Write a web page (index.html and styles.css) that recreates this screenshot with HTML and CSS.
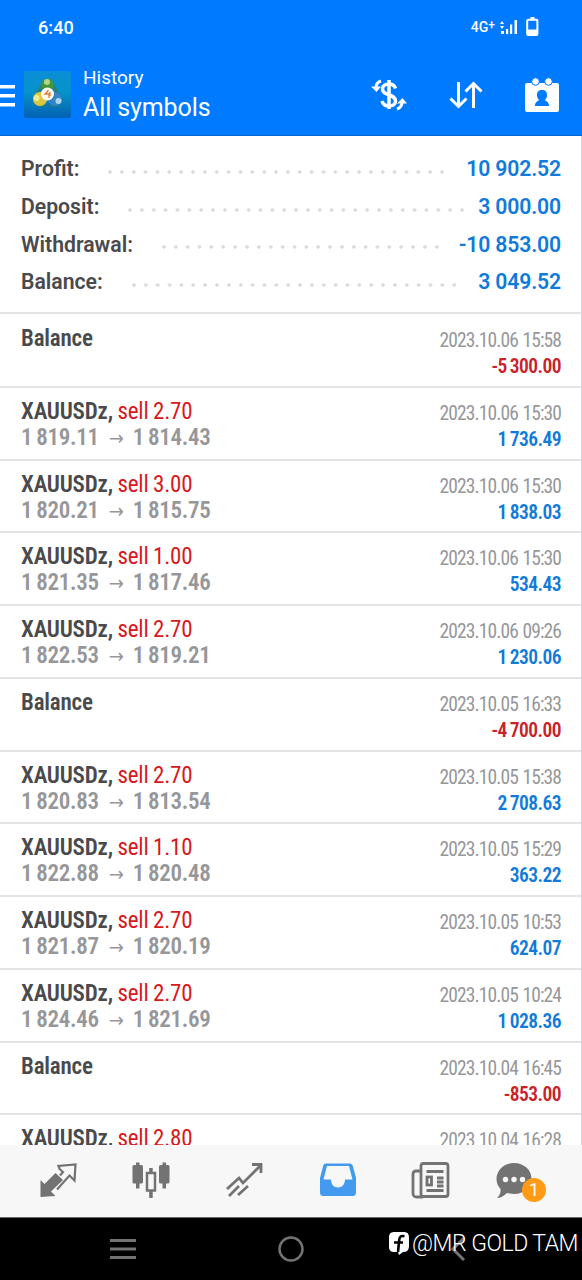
FILE: index.html
```html
<!doctype html>
<html lang="en">

<head>
    <meta charset="utf-8">
    <meta name="viewport" content="width=device-width, initial-scale=1.0">
    <title>History</title>
    <link rel="stylesheet" href="styles.css">
</head>

<body>
    <div class="screen">
        <header class="header">
            <div class="status-bar">
                <span class="clock">6:40</span>
                <span class="network">4G<sup>+</sup></span>
                <svg class="signal" width="18" height="16" viewBox="0 0 18 16" fill="#fff">
                    <path d="M0 5l2-3 2 3zM0 7h4l-2 3zM1 12h3v3H1zM6 10h2.200v5H6zM10 5.500h2.200V15H10zM14.500 1h2.500v14h-2.500z"/>
                </svg>
                <svg class="battery" width="13" height="20" viewBox="0 0 13 20">
                    <path d="M4.500 0h4v2h-4z" fill="#fff"/>
                    <rect x="1.200" y="2.700" width="10.200" height="15.200" rx="1" fill="none" stroke="#fff" stroke-width="2"/>
                    <path d="M1 12.500h11V18H1z" fill="#fff"/>
                </svg>
            </div>
            <div class="title-bar">
                <svg class="menu" width="15" height="24" viewBox="0 0 15 24" fill="#fff">
                    <path d="M0 2h15v3.500H0zM0 11h15v3.500H0zM0 20h15v3.500H0z"/>
                </svg>
                <svg class="logo" width="48" height="48" viewBox="0 0 48 48">
                    <defs>
                        <linearGradient id="sea" x1="0" y1="0" x2="0" y2="1">
                            <stop offset="0" stop-color="#0a8fd6"/>
                            <stop offset=".45" stop-color="#0792ca"/>
                            <stop offset="1" stop-color="#0560b4"/>
                        </linearGradient>
                    </defs>
                    <rect width="47" height="47" rx="2" fill="url(#sea)"/>
                    <path d="M20 11L10 28l3 6h8M27 11l10 17-3 6h-8" fill="none" stroke="#2b7f75" stroke-width="3"/>
                    <circle cx="23.500" cy="14" r="6.500" fill="#43963c"/>
                    <circle cx="23" cy="11" r="3" fill="#b4d48a"/>
                    <circle cx="16" cy="28" r="7" fill="#dcc840"/>
                    <circle cx="12.500" cy="27" r="3" fill="#f3e89a"/>
                    <circle cx="31" cy="28" r="7" fill="#3184c7"/>
                    <circle cx="34.500" cy="30" r="3" fill="#acd6ef"/>
                    <circle cx="23.500" cy="23" r="6.500" fill="#fffaf0"/>
                    <path d="M24.500 19l-3.500 4h4v4M26 21v4" fill="none" stroke="#e87939" stroke-width="1.300"/>
                </svg>
                <div class="titles">
                    <div class="subtitle">History</div>
                    <h1>All symbols</h1>
                </div>
                <svg class="currency" width="36" height="32" viewBox="0 0 36 32" fill="none" stroke="#fff">
                    <path d="M24.500 9.500c-1-3.500-3-4.500-6.500-4.500-4 0-6.500 2-6.500 5 0 7 13 4.500 13 12 0 3-2.500 5-6.500 5-4 0-6-1.500-7-5M18 1v29" stroke-width="3.500"/>
                    <path d="M10 2C6.500 3 5 5 5 9M26 30c3.500-1 5-3 5-7" stroke-width="3"/>
                    <path d="M0 7.500h10L5.500 13zM26 24.500h10L31.500 19z" fill="#fff" stroke="none"/>
                </svg>
                <svg class="sort" width="34" height="30" viewBox="0 0 34 30" fill="none" stroke="#fff" stroke-width="3">
                    <path d="M9.500 2v25M1.500 18.500l8 8 8-8M24.500 28V4M16.500 11.500l8-8 8 8"/>
                </svg>
                <svg class="calendar" width="36" height="36" viewBox="0 0 36 36">
                    <rect x="1" y="6" width="34" height="29" rx="2" fill="#fff"/>
                    <circle cx="11.500" cy="4.500" r="3.800" fill="#fff" stroke="#007aff"/>
                    <circle cx="24.500" cy="4.500" r="3.800" fill="#fff" stroke="#007aff"/>
                    <path d="M18 13c3.500 0 5 2 5 5 0 2-.5 3.500-2 5 .5 1.500 4 1 4 6H11c0-5 3.500-4.500 4-6-1.500-1.500-2-3-2-5 0-3 1.500-5 5-5z" fill="#007aff"/>
                </svg>
            </div>
        </header>

        <section class="summary">
            <div class="total"><b>Profit:</b><i class="dots profit"></i><span>10 902.52</span></div>
            <div class="total"><b>Deposit:</b><i class="dots deposit"></i><span>3 000.00</span></div>
            <div class="total"><b>Withdrawal:</b><i class="dots withdrawal"></i><span>-10 853.00</span></div>
            <div class="total"><b>Balance:</b><i class="dots balance"></i><span>3 049.52</span></div>
        </section>

        <main class="deals">
            <div class="deal">
                <div class="info"><div class="name">Balance</div></div>
                <div class="result"><div class="date">2023.10.06 15:58</div><div class="amount loss">-5 300.00</div></div>
            </div>
            <div class="deal">
                <div class="info"><div class="name">XAUUSDz, <span class="sell">sell 2.70</span></div><div class="price">1 819.11<span class="arrow">→</span>1 814.43</div></div>
                <div class="result"><div class="date">2023.10.06 15:30</div><div class="amount">1 736.49</div></div>
            </div>
            <div class="deal">
                <div class="info"><div class="name">XAUUSDz, <span class="sell">sell 3.00</span></div><div class="price">1 820.21<span class="arrow">→</span>1 815.75</div></div>
                <div class="result"><div class="date">2023.10.06 15:30</div><div class="amount">1 838.03</div></div>
            </div>
            <div class="deal">
                <div class="info"><div class="name">XAUUSDz, <span class="sell">sell 1.00</span></div><div class="price">1 821.35<span class="arrow">→</span>1 817.46</div></div>
                <div class="result"><div class="date">2023.10.06 15:30</div><div class="amount">534.43</div></div>
            </div>
            <div class="deal">
                <div class="info"><div class="name">XAUUSDz, <span class="sell">sell 2.70</span></div><div class="price">1 822.53<span class="arrow">→</span>1 819.21</div></div>
                <div class="result"><div class="date">2023.10.06 09:26</div><div class="amount">1 230.06</div></div>
            </div>
            <div class="deal">
                <div class="info"><div class="name">Balance</div></div>
                <div class="result"><div class="date">2023.10.05 16:33</div><div class="amount loss">-4 700.00</div></div>
            </div>
            <div class="deal">
                <div class="info"><div class="name">XAUUSDz, <span class="sell">sell 2.70</span></div><div class="price">1 820.83<span class="arrow">→</span>1 813.54</div></div>
                <div class="result"><div class="date">2023.10.05 15:38</div><div class="amount">2 708.63</div></div>
            </div>
            <div class="deal">
                <div class="info"><div class="name">XAUUSDz, <span class="sell">sell 1.10</span></div><div class="price">1 822.88<span class="arrow">→</span>1 820.48</div></div>
                <div class="result"><div class="date">2023.10.05 15:29</div><div class="amount">363.22</div></div>
            </div>
            <div class="deal">
                <div class="info"><div class="name">XAUUSDz, <span class="sell">sell 2.70</span></div><div class="price">1 821.87<span class="arrow">→</span>1 820.19</div></div>
                <div class="result"><div class="date">2023.10.05 10:53</div><div class="amount">624.07</div></div>
            </div>
            <div class="deal">
                <div class="info"><div class="name">XAUUSDz, <span class="sell">sell 2.70</span></div><div class="price">1 824.46<span class="arrow">→</span>1 821.69</div></div>
                <div class="result"><div class="date">2023.10.05 10:24</div><div class="amount">1 028.36</div></div>
            </div>
            <div class="deal">
                <div class="info"><div class="name">Balance</div></div>
                <div class="result"><div class="date">2023.10.04 16:45</div><div class="amount loss">-853.00</div></div>
            </div>
            <div class="deal">
                <div class="info"><div class="name">XAUUSDz, <span class="sell">sell 2.80</span></div></div>
                <div class="result"><div class="date">2023.10.04 16:28</div></div>
            </div>
        </main>

        <nav class="tabs">
            <a class="tab">
                <svg width="40" height="40" viewBox="0 0 40 40">
                    <path d="M2.500 20v17l15-1-4.500-4.500 12-11.500L17.500 13 6.500 24z" fill="#737373"/>
                    <path d="M21 8.500l4 3.500-3 3.500M21.500 8.500l-1-2.500 17-1.500-1 16-5-5-12.500 14" fill="none" stroke="#737373" stroke-width="2.200"/>
                </svg>
            </a>
            <a class="tab">
                <svg width="40" height="40" viewBox="0 0 40 40" fill="#737373">
                    <rect x="1.500" y="5" width="10.500" height="18.500" rx="1.500"/>
                    <path d="M5 2.500h3.500v26H5zM31.500 2.500H35v26h-3.500zM18.200 8h3.500v5h-3.500zM18.200 31h3.500v7h-3.500z"/>
                    <rect x="28" y="5" width="10.500" height="18.500" rx="1.500"/>
                    <rect x="16" y="13" width="8" height="17.500" fill="none" stroke="#737373" stroke-width="2.500"/>
                </svg>
            </a>
            <a class="tab">
                <svg width="40" height="40" viewBox="0 0 40 40" fill="none" stroke="#737373" stroke-width="2.800">
                    <path d="M3 29l12-11 4 5L36 6M28 4.500h9V13M5 36l10-10M14 35l10-9"/>
                </svg>
            </a>
            <a class="tab">
                <svg width="40" height="40" viewBox="0 0 40 40">
                    <path d="M7.500 3.500h24c2 0 3 1 3.500 3L38 18v14c0 3-1 4-4 4H6c-3 0-4-1-4-4V18L5 6.500c.5-2 1-3 2.500-3z" fill="#439aef"/>
                    <path d="M9 6h22l3.500 13.500h-7.500c0 5-3 8-7 8s-7-3-7-8H5.500z" fill="#f7f7f7"/>
                </svg>
            </a>
            <a class="tab">
                <svg width="40" height="40" viewBox="0 0 40 40" fill="none" stroke="#737373" stroke-width="2.800">
                    <rect x="10" y="3.500" width="27" height="33" rx="2.500"/>
                    <path d="M9 11H5c-2 0-3 1-3 3v19c0 3 1 4 4 4h6M15.500 11.500h17M15.500 30.500h17M26 18h6.500M26 22h6.500M26 26h6.500"/>
                    <rect x="16" y="17" width="4.500" height="8"/>
                </svg>
            </a>
            <a class="tab chat">
                <svg width="40" height="40" viewBox="0 0 40 40">
                    <path d="M19 3c10 0 17.500 7 17.500 15.500S29 34 19 34l-7-1c-3 3-7 5-10 5 3-3 4-6 3.500-9C3 26 1.500 23 1.500 19 1.500 10 9 3 19 3z" fill="#737373"/>
                    <g fill="#f7f7f7"><circle cx="10.500" cy="19.500" r="2.700"/><circle cx="19" cy="19.500" r="2.700"/><circle cx="27.500" cy="19.500" r="2.700"/></g>
                </svg>
                <span class="badge">1</span>
            </a>
        </nav>

        <footer class="system-nav">
            <svg width="26" height="22" viewBox="0 0 26 22" fill="#737373"><path d="M0 1h26v3H0zM0 9.500h26v3H0zM0 18h26v3H0z"/></svg>
            <svg class="home" width="28" height="28" viewBox="0 0 28 28"><circle cx="14" cy="14" r="11.500" fill="none" stroke="#737373" stroke-width="2.500"/></svg>
            <svg width="16" height="26" viewBox="0 0 16 26"><path d="M14 2L3 13l11 11" fill="none" stroke="#737373" stroke-width="3"/></svg>
            <div class="watermark">
                <svg width="20" height="24" viewBox="0 0 20 24"><path d="M6 0h8c5 0 6 2 6 6v8c0 5-3 6-6 6l-4 3-1-3H6c-5 0-6-2-6-6V6c0-4 1-6 6-6z" fill="#fff"/><path d="M15.500 4.200c-4-1-5 .8-5.300 3.800L9 20M5 10.500h9" fill="none" stroke="#000" stroke-width="2.600"/></svg>
                <span>@MR GOLD TAM</span>
            </div>
        </footer>
    </div>
</body>

</html>
```
FILE: styles.css
```css
html, body {
    margin: 0;
    padding: 0;
    font-family: 'Roboto', 'Arial', sans-serif;
    background: #ffffff;
    color: #4a4a4d;
}

.screen {
    width: 582px;
    height: 1280px;
    display: flex;
    flex-direction: column;
    overflow: hidden;
}

svg { display: block; flex: none; }

/* Header */
.header {
    height: 136px;
    flex: none;
    box-sizing: border-box;
    background: #007aff;
    border-bottom: 1px solid #0868cc;
    color: #ffffff;
}

.status-bar {
    display: flex;
    align-items: center;
    height: 54px;
    padding: 0 43px 0 38px;
}

.clock {
    flex: 1;
    font-size: 18px;
    font-weight: 500;
    letter-spacing: 0.1px;
}

.network { font-size: 14px; font-weight: 500; }
.network sup { font-size: 12px; line-height: 0; vertical-align: 3px; }
.signal { margin-left: 5px; }
.battery { margin-left: 8px; }

.title-bar {
    display: flex;
    align-items: center;
    height: 82px;
}

.logo { margin-left: 9px; }

.titles {
    flex: 1;
    margin-left: 11px;
}

.subtitle { font-size: 19px; line-height: 26px; }

h1 {
    margin: 0;
    font-size: 25px;
    font-weight: 400;
    line-height: 34px;
    letter-spacing: -0.1px;
}

.sort { margin-left: 42px; }
.calendar { margin: 0 22px 0 41px; }

/* Totals */
.summary {
    height: 178px;
    flex: none;
    box-sizing: border-box;
    padding: 14px 20px 0 21px;
    border-bottom: 2px solid #e4e4e6;
    border-right: 1px solid #d5d5d8;
}

.total {
    display: flex;
    align-items: center;
    height: 37.7px;
    font-size: 21.2px;
}

.total b { font-weight: 600; }
.total span { margin-left: auto; font-weight: 600; letter-spacing: -0.15px; color: #107bda; }

.dots {
    height: 4px;
    margin: 6px 0 0 29px;
    background: radial-gradient(circle at 2px 2px, #d9d9dc 1.4px, transparent 2px) 0 0 / 11.87px 4px repeat-x;
}

.dots.profit { width: 340px; }
.dots.deposit { width: 336px; }
.dots.withdrawal { width: 278px; }
.dots.balance { width: 326px; }

/* Deals */
.deals {
    flex: 1;
    min-height: 0;
    padding-top: 1px;
    overflow: hidden;
    border-right: 1px solid #d5d5d8;
    font-family: 'Roboto Condensed', 'Roboto', 'Arial', sans-serif;
    font-stretch: 75%;
}

.deal {
    display: flex;
    justify-content: space-between;
    height: 72.75px;
    box-sizing: border-box;
    padding: 11px 20px 0 21px;
    border-bottom: 2px solid #e4e4e6;
}

.name, .price {
    font-size: 23px;
    font-weight: 600;
    line-height: 26px;
    letter-spacing: -0.2px;
}

.name { word-spacing: -0.5px; }
.price { color: #97979a; letter-spacing: -0.3px; word-spacing: -1px; }
.sell { font-weight: 400; color: #d71920; }

.arrow {
    margin: 0 9px 0 10px;
    font-family: 'DejaVu Sans';
    font-size: 20px;
    font-weight: 400;
    line-height: 0;
}

.result { text-align: right; padding-top: 2px; }

.date, .amount {
    font-size: 19.5px;
    line-height: 26px;
}

.date { color: #97979a; letter-spacing: -0.9px; word-spacing: 1px; }
.amount { font-weight: 600; letter-spacing: -0.55px; word-spacing: -1px; color: #107bda; }
.amount.loss { color: #c9222a; }

/* Bottom tabs */
.tabs {
    display: flex;
    justify-content: space-between;
    height: 72px;
    flex: none;
    box-sizing: border-box;
    padding: 15px 47px 0 38px;
    background: #f7f7f7;
}

.tab { position: relative; }
.tab.chat { margin-left: -9px; }

.badge {
    position: absolute;
    left: 27px;
    top: 18px;
    width: 24px;
    height: 24px;
    border-radius: 50%;
    background: #ff9b17;
    color: #ffffff;
    font-size: 18px;
    line-height: 24px;
    text-align: center;
}

.system-nav {
    position: relative;
    display: flex;
    align-items: center;
    justify-content: space-between;
    height: 63px;
    flex: none;
    box-sizing: border-box;
    padding: 0 116px 0 110px;
    border-top: 1px solid #6c6c6c;
    background: #000000;
}

.home { margin-right: 4px; }

.watermark {
    position: absolute;
    right: 4px;
    top: 12px;
    display: flex;
    gap: 3px;
    align-items: center;
    color: #ffffff;
    font-size: 23px;
    font-weight: 350;
    letter-spacing: -0.5px;
    white-space: nowrap;
}
```
